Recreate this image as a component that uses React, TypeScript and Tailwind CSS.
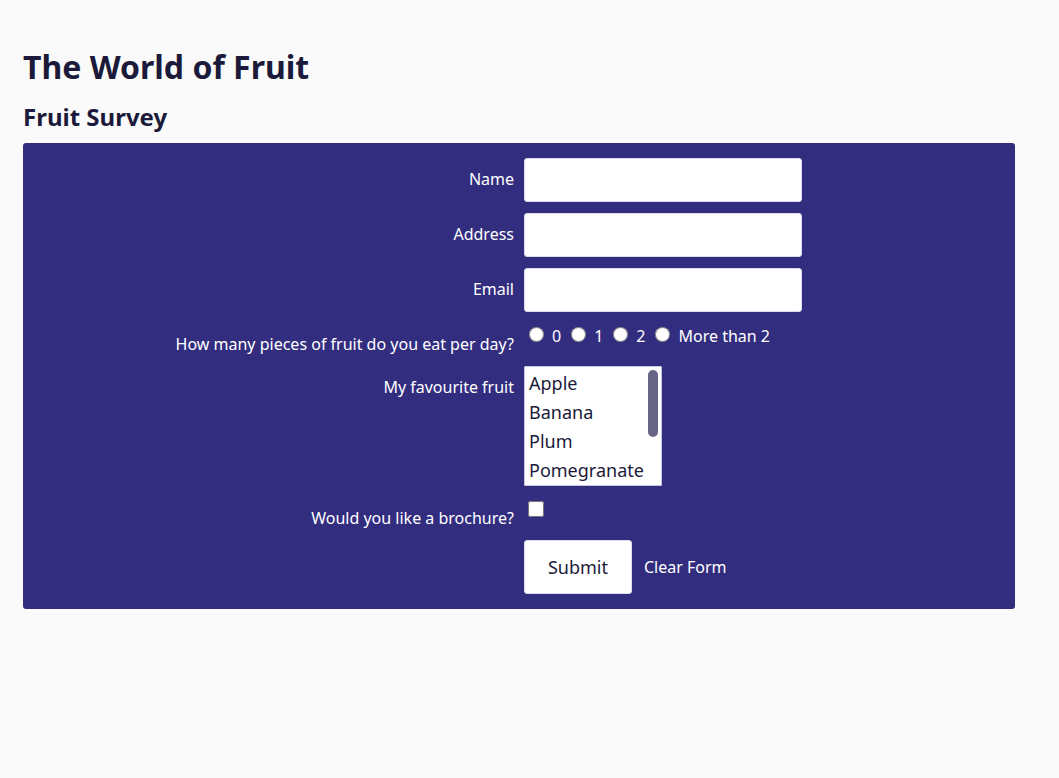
import React from 'react';

const fruits = ['Apple', 'Banana', 'Plum', 'Pomegranate', 'Cherry', 'Mango'];

function Label({ children }: { children: React.ReactNode }) {
  return <label className="pt-[10px] text-right text-base leading-[22px] text-white">{children}</label>;
}

export default function App() {
  return (
    <div className="min-h-screen bg-[#fafafa] px-[23px] pt-[44px] text-[#1b1a3a]" style={{ fontFamily: '"Noto Sans", "Open Sans", sans-serif' }}>
      <h1 className="text-[32px] font-bold leading-[46px]">The World of Fruit</h1>
      <h2 className="mt-[11px] text-2xl font-bold leading-8">Fruit Survey</h2>

      <form className="mt-[10px] grid w-[992px] grid-cols-2 gap-x-[10px] gap-y-[11px] rounded-[3px] bg-[#332d80] pb-[15px] pt-[15px]">
        <Label>Name</Label>
        <input className="h-[44px] w-[278px] rounded-[3px] border border-[#dcdcec] bg-white px-2" />

        <Label>Address</Label>
        <input className="h-[44px] w-[278px] rounded-[3px] border border-[#dcdcec] bg-white px-2" />

        <Label>Email</Label>
        <input className="h-[44px] w-[278px] rounded-[3px] border border-[#dcdcec] bg-white px-2" />

        <Label>How many pieces of fruit do you eat per day?</Label>
        <div className="flex items-start text-base leading-[22px] text-white">
          {['0', '1', '2', 'More than 2'].map((v) => (
            <span key={v} className="mr-[5px] flex items-start">
              <input type="radio" name="count" className="ml-[5px] mr-[8px] mt-[4px] h-[15px] w-[15px] accent-white" />
              <span className="pt-[2px]">{v}</span>
            </span>
          ))}
        </div>

        <Label>My favourite fruit</Label>
        <div className="flex h-[120px] w-[138px] overflow-hidden rounded-[1px] border border-[#c8c8dc] bg-white">
          <ul className="flex-1 pl-[4px] pt-[2px] text-lg leading-[29px]">
            {fruits.slice(0, 4).map((f) => (
              <li key={f}>{f}</li>
            ))}
          </ul>
          <div className="w-[13px] pt-[3px]">
            <div className="h-[67px] w-[10px] rounded-full bg-[#676585]" />
          </div>
        </div>

        <Label>Would you like a brochure?</Label>
        <div className="pt-[2px]">
          <input type="checkbox" className="ml-[4px] h-[16px] w-[16px] rounded-[3px] accent-white" />
        </div>

        <div />
        <div className="flex items-center">
          <button type="button" className="h-[54px] w-[108px] rounded-[3px] border border-[#dcdcec] bg-white text-lg text-[#1b1a3a]">
            Submit
          </button>
          <button type="button" className="ml-[12px] text-base text-white">
            Clear Form
          </button>
        </div>
      </form>
    </div>
  );
}
